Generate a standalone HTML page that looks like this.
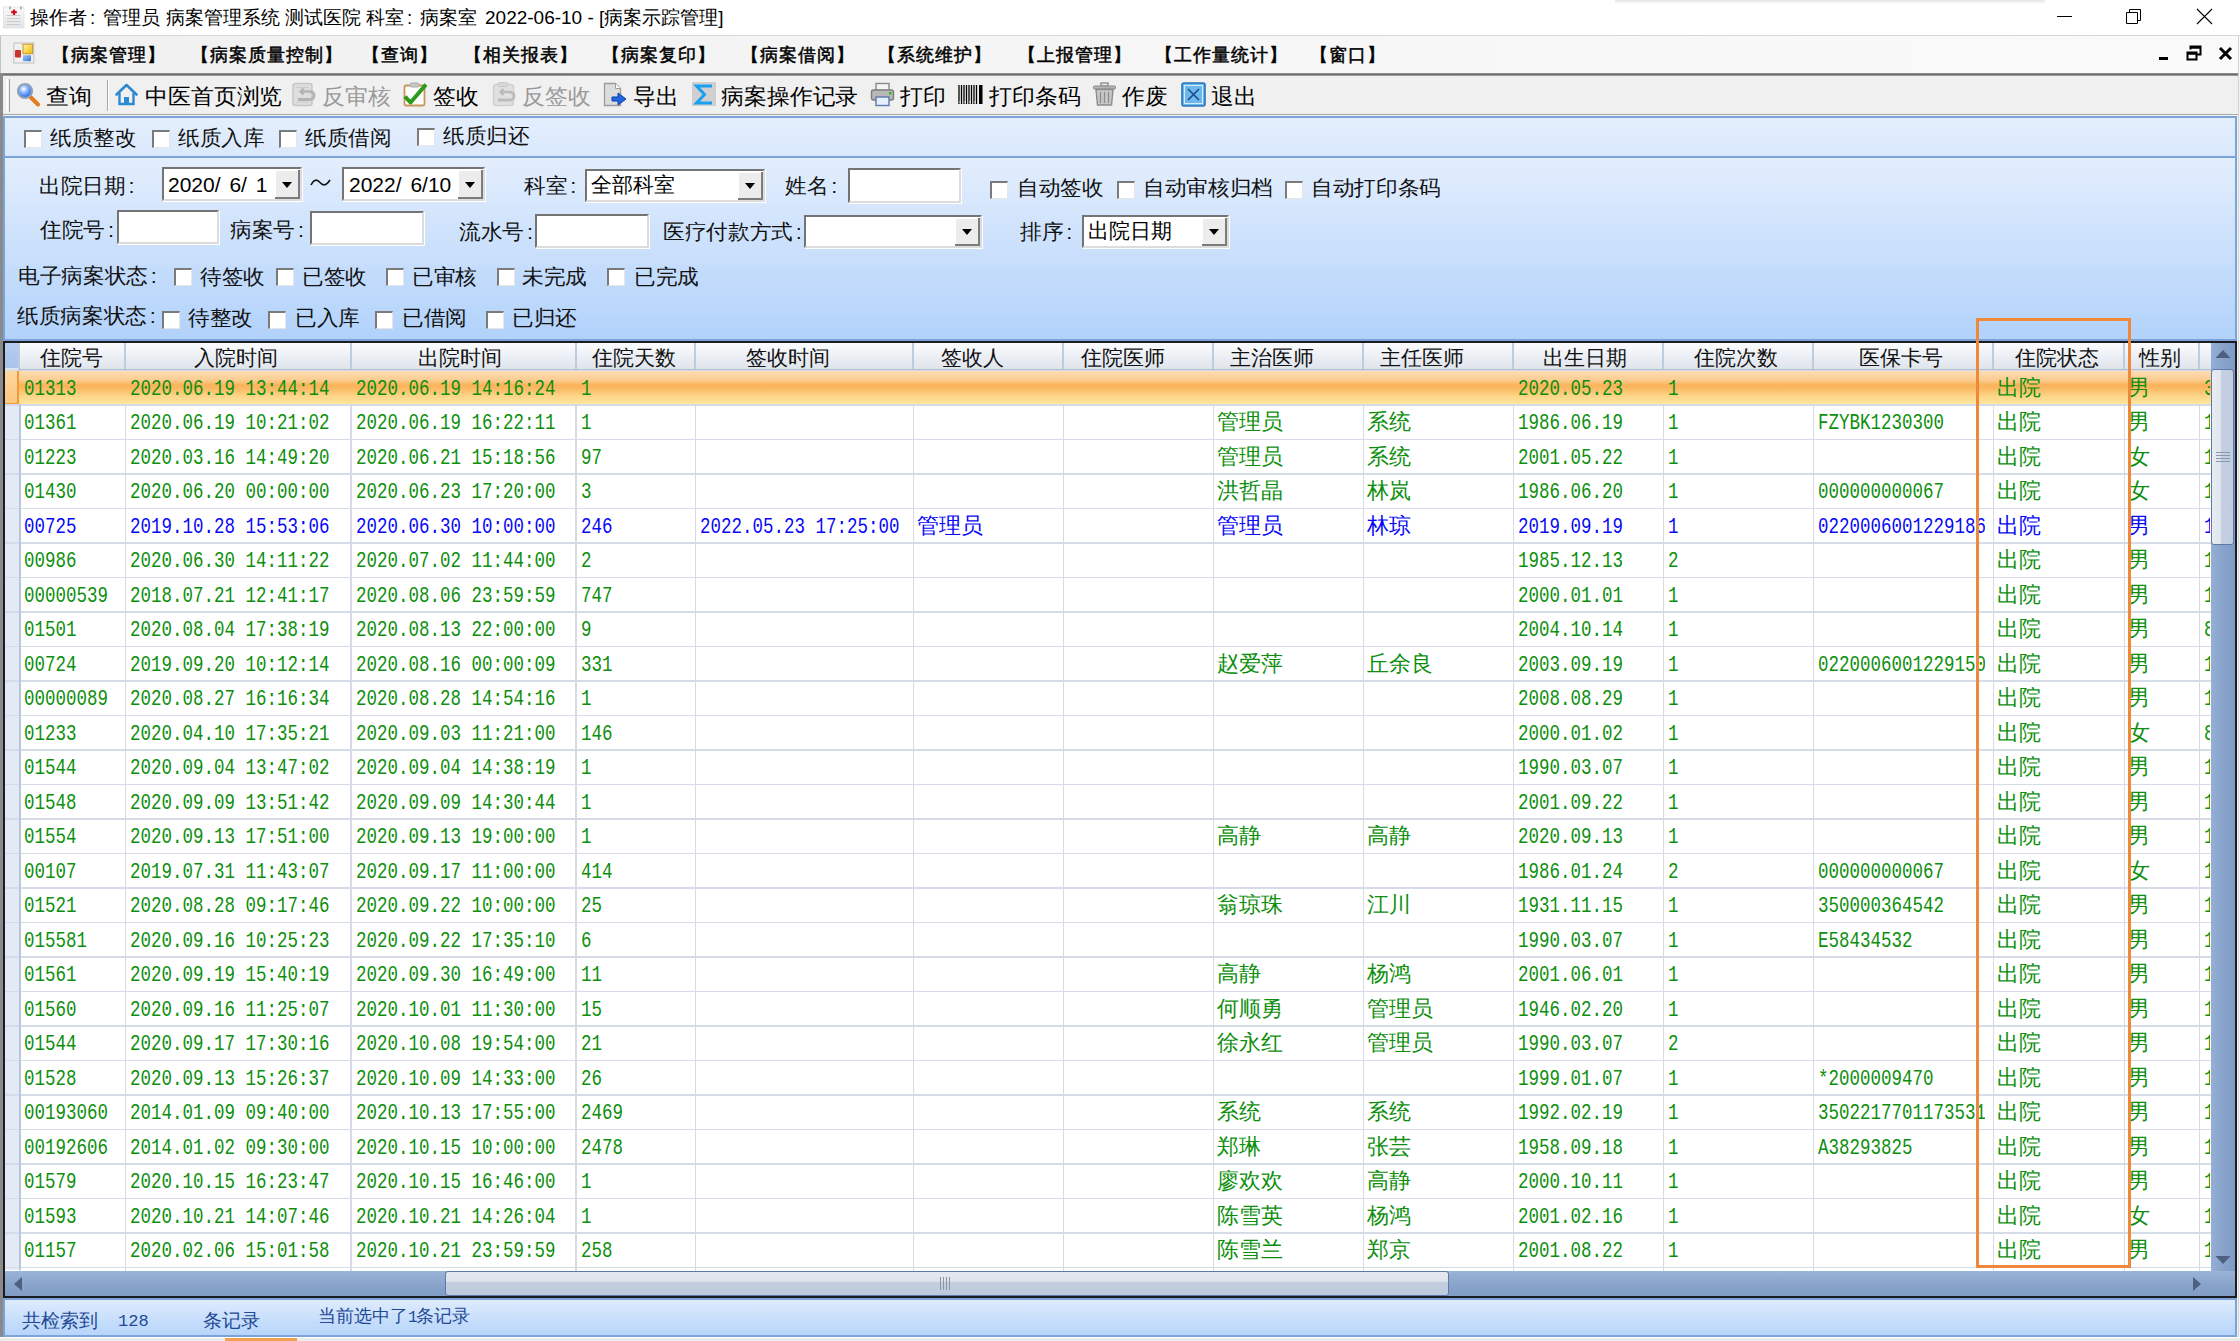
<!DOCTYPE html>
<html><head><meta charset="utf-8">
<style>
*{margin:0;padding:0;box-sizing:border-box}
html,body{width:2240px;height:1341px;overflow:hidden;background:#f2f2f2;font-family:"Liberation Sans",sans-serif;color:#000}
.a{position:absolute}
.t{position:absolute;white-space:nowrap;line-height:1}
#title{left:0;top:0;width:2240px;height:36px;background:#fff;border-bottom:1px solid #d6d6d6}
#menu{left:0;top:36px;width:2240px;height:37px;background:linear-gradient(90deg,#f0f0f0,#f6f6f6 50%,#fafafa)}
#menusep{left:0;top:72.5px;width:2238px;height:3px;background:linear-gradient(#9a9a9a,#6e6e6e,#b0b0b0)}
#tool{left:3px;top:75.5px;width:2235px;height:39px;background:#f0f0f0;border-bottom:1.5px solid #a8a8a8}
.leftbar{left:0;top:73px;width:3px;height:1268px;background:#8a8a8a}
#cbp{left:3px;top:116px;width:2234px;height:42px;background:linear-gradient(#e4effd,#dae8fc);border:2px solid #7ba3d9}
#flt{left:3px;top:158px;width:2234px;height:183px;background:linear-gradient(#e3eefd,#b2d2fb);border:2px solid #7ba3d9;border-top:none}
.menu-i{font-size:18px;font-weight:normal;top:46px;color:#000;letter-spacing:1px;-webkit-text-stroke:0.5px #000}
.co{display:inline-block;width:12px;padding-left:3px}
.ttl{top:8px;font-size:19px;color:#000}
.tb{font-size:22px;top:85.5px;color:#000;transform:scaleX(1.04);transform-origin:0 0}
.tb.dis{color:#9a9a9a}
.lbl{font-size:21px;color:#111;transform:scaleX(1.03);transform-origin:0 0}
.cb{position:absolute;width:18px;height:18px;background:#fff;border-top:2px solid #7a7a7a;border-left:2px solid #7a7a7a;border-right:1px solid #e6e6e6;border-bottom:1px solid #e6e6e6}
.inp{position:absolute;background:#fff;border-top:2px solid #747474;border-left:2px solid #747474;border-right:2px solid #dcdcdc;border-bottom:2px solid #dcdcdc;box-shadow:1px 1px 0 #fff}
.dd{position:absolute;right:0;top:1px;width:25px;bottom:0;background:#ececec;border-right:2px solid #7c7c7c;border-bottom:2px solid #7c7c7c;box-shadow:inset 1px 1px 0 #fff}
.dd:after{content:"";position:absolute;left:7px;top:50%;margin-top:-2px;border-left:5px solid transparent;border-right:5px solid transparent;border-top:6px solid #000}
.inptxt.dt{font-size:21px;top:5px;word-spacing:3px;white-space:pre}
.inptxt{position:absolute;left:4px;top:3px;font-size:21px;white-space:nowrap;line-height:1}
.hdr{background:linear-gradient(#fbfcfd 0%,#eef1f6 45%,#dfe4ec 100%);border-bottom:1px solid #b0c0d4}
.rl{height:1.5px;background:#d5dce8}
.sel{background:linear-gradient(#fcdcb4 0%,#fbcc90 28%,#fab45a 42%,#fbb862 52%,#fcd488 75%,#fde69c 100%)}
.cl{width:1.5px;background:#d5dce8}
.hl{width:2px;background:#bccde0}
.ht{font-size:21px;text-align:center;color:#111;line-height:1}
.cellc{font-size:22px;line-height:1;white-space:nowrap;overflow:hidden}
.celld{font-family:"Liberation Mono",monospace;font-size:22px;line-height:1;white-space:nowrap;overflow:hidden}
.celld span{display:inline-block;transform:scaleX(0.795);transform-origin:0 0}
</style></head><body>
<!-- title bar -->
<div id="title" class="a"></div>
<div class="a" style="left:1615px;top:0;width:430px;height:4px;background:linear-gradient(#d8d8d8,#fff);opacity:.7"></div>
<svg class="a" style="left:3px;top:5px" width="22" height="24" viewBox="0 0 22 24">
<defs><linearGradient id="pad" x1="0" y1="0" x2="0" y2="1"><stop offset="0" stop-color="#fafafa"/><stop offset="1" stop-color="#e4e4e4"/></linearGradient></defs>
<rect x="0.5" y="2" width="20.5" height="21" fill="url(#pad)" stroke="#e0e0e0" stroke-width="0.8"/>
<path d="M7 1.5v3M18 1.5v3" stroke="#8a8a8a" stroke-width="1.2"/>
<path d="M3.5 10.5h14M3.5 13.5h14M3.5 16.5h14M3.5 19.5h14" stroke="#c4c8cc" stroke-width="0.9"/>
<path d="M11 4.5v5.5M8.2 7.2h5.6" stroke="#d81020" stroke-width="2.2"/>
</svg>
<div class="t ttl" style="left:30px">操作者<span class="co">:</span></div>
<div class="t ttl" style="left:103px">管理员</div>
<div class="t ttl" style="left:166px">病案管理系统</div>
<div class="t ttl" style="left:285px">测试医院</div>
<div class="t ttl" style="left:366px">科室<span class="co">:</span></div>
<div class="t ttl" style="left:420px">病案室</div>
<div class="t ttl" style="left:485px">2022-06-10 - [病案示踪管理]</div>
<div class="a" style="left:2057px;top:16px;width:15px;height:1px;background:#000"></div>
<svg class="a" style="left:2125px;top:8px" width="18" height="18" viewBox="0 0 18 18"><path d="M1.5 4.5h11v11h-11z M4.5 4.5v-3h11v11h-3" fill="none" stroke="#000" stroke-width="1"/></svg>
<svg class="a" style="left:2196px;top:8px" width="18" height="18" viewBox="0 0 18 18"><path d="M1 1L16 16M16 1L1 16" stroke="#000" stroke-width="1.1"/></svg>

<!-- menu bar -->
<div id="menu" class="a"></div>
<div id="menusep" class="a"></div>
<div class="leftbar a"></div>
<div class="a" style="left:0;top:36px;width:1px;height:37px;background:#c4c4c4"></div>
<svg class="a" style="left:13px;top:42px" width="22" height="22" viewBox="0 0 22 22">
<defs><linearGradient id="yel" x1="0" y1="0" x2="1" y2="1"><stop offset="0" stop-color="#fff4b0"/><stop offset="1" stop-color="#f0b800"/></linearGradient>
<linearGradient id="blu" x1="0" y1="0" x2="1" y2="1"><stop offset="0" stop-color="#9cc4ff"/><stop offset="1" stop-color="#3f76d8"/></linearGradient></defs>
<rect x="0.8" y="1" width="20" height="20" fill="#f0f0f0" stroke="#c8c8c8" stroke-width="1.2"/>
<rect x="10" y="2.2" width="9.5" height="9.5" fill="url(#yel)" stroke="#c8981a" stroke-width="1"/>
<rect x="2" y="8" width="6" height="7.5" rx="1" fill="#c8342a"/>
<rect x="10" y="13.2" width="8" height="6" fill="url(#blu)"/>
</svg>
<div class="t menu-i" style="left:52.0px">【病案管理】</div>
<div class="t menu-i" style="left:190.5px">【病案质量控制】</div>
<div class="t menu-i" style="left:362.0px">【查询】</div>
<div class="t menu-i" style="left:464.0px">【相关报表】</div>
<div class="t menu-i" style="left:601.5px">【病案复印】</div>
<div class="t menu-i" style="left:740.8px">【病案借阅】</div>
<div class="t menu-i" style="left:878.0px">【系统维护】</div>
<div class="t menu-i" style="left:1017.6px">【上报管理】</div>
<div class="t menu-i" style="left:1155.0px">【工作量统计】</div>
<div class="t menu-i" style="left:1310.0px">【窗口】</div>
<div class="a" style="left:2159px;top:57px;width:9px;height:3px;background:#000"></div>
<svg class="a" style="left:2186px;top:45px" width="16" height="16" viewBox="0 0 16 16"><path d="M1.5 7.5h9v7h-9z" fill="none" stroke="#000" stroke-width="2"/><path d="M4.5 4.5v-3h10v8h-4" fill="none" stroke="#000" stroke-width="2"/><path d="M4 2.5h10.5" stroke="#000" stroke-width="2.5"/><path d="M1 8.5h10" stroke="#000" stroke-width="2.5"/></svg>
<svg class="a" style="left:2218px;top:46px" width="15" height="15" viewBox="0 0 15 15"><path d="M2 2L13 13M13 2L2 13" stroke="#000" stroke-width="3"/></svg>

<!-- toolbar -->
<div id="tool" class="a"></div>
<!-- gripper -->
<div class="a" style="left:6px;top:79px;width:2px;height:32px;background:#fcfcfc"></div>
<div class="a" style="left:8.5px;top:79px;width:1.5px;height:33px;background:#a0a0a0"></div>
<!-- search icon -->
<svg class="a" style="left:16px;top:82px" width="25" height="25" viewBox="0 0 25 25">
<defs><radialGradient id="lens" cx="0.4" cy="0.35" r="0.6"><stop offset="0" stop-color="#ffffff"/><stop offset="0.45" stop-color="#8fb8ff"/><stop offset="1" stop-color="#2f6fe8"/></radialGradient></defs>
<line x1="14.5" y1="15" x2="22" y2="22.5" stroke="#e67a1e" stroke-width="4" stroke-linecap="round"/>
<circle cx="9" cy="9" r="7" fill="url(#lens)" stroke="#8fa3b8" stroke-width="2.2"/>
</svg>
<div class="t tb" style="left:46px">查询</div>
<div class="a" style="left:107px;top:80px;width:1px;height:31px;background:#a8a8a8"></div>
<div class="a" style="left:108px;top:80px;width:1px;height:31px;background:#fff"></div>
<!-- home -->
<svg class="a" style="left:114px;top:82px" width="25" height="25" viewBox="0 0 25 25">
<path d="M2.5 12.5L12.5 3L22.5 12.5" fill="none" stroke="#2b8ad0" stroke-width="2.6" stroke-linejoin="round" stroke-linecap="round"/>
<path d="M5.5 11v11h14V11" fill="none" stroke="#2b8ad0" stroke-width="2.4"/>
<rect x="10" y="15" width="5" height="7" fill="#2b8ad0"/>
</svg>
<div class="t tb" style="left:145px">中医首页浏览</div>
<!-- 反审核 disabled -->
<svg class="a" style="left:292px;top:82px" width="25" height="25" viewBox="0 0 25 25">
<rect x="1" y="1.5" width="19" height="22" rx="2.5" fill="#dedede" stroke="#c6c6c6" stroke-width="1.5"/>
<path d="M5 5.5h11M5 20h11" stroke="#c0c0c0" stroke-width="1.2" stroke-dasharray="2 1"/>
<path d="M18 9.5H8.5M11.5 6.5l-3 3 3 3" fill="none" stroke="#b4b4b4" stroke-width="2.4"/>
<path d="M6 17.5h12a4 4 0 0 0 0-8" fill="none" stroke="#b4b4b4" stroke-width="3"/>
</svg>
<div class="t tb dis" style="left:322px">反审核</div>
<!-- 签收 -->
<svg class="a" style="left:403px;top:82px" width="26" height="25" viewBox="0 0 26 25">
<rect x="1.5" y="3.5" width="20" height="20" rx="1.5" fill="#fff" stroke="#c8965a" stroke-width="1.8"/>
<rect x="7" y="1" width="9" height="4" rx="1.5" fill="#c8c8c8" stroke="#a8a8a8" stroke-width="1"/>
<path d="M2 14.5l5.5 6l15.5-18" fill="none" stroke="#2c9a1a" stroke-width="4" stroke-linejoin="round"/>
</svg>
<div class="t tb" style="left:433px">签收</div>
<!-- 反签收 disabled -->
<svg class="a" style="left:492px;top:82px" width="25" height="25" viewBox="0 0 25 25">
<rect x="1.5" y="2.5" width="20" height="21" rx="3" fill="#e0e0e0" stroke="#d0d0d0" stroke-width="1.5"/>
<rect x="6" y="0.5" width="10" height="4" rx="1.5" fill="#d8d8d8" stroke="#c8c8c8" stroke-width="1"/>
<path d="M18 10H8.5M11.5 7l-3 3 3 3" fill="none" stroke="#bcbcbc" stroke-width="2.4"/>
<path d="M6 18h12a4 4 0 0 0 0-8" fill="none" stroke="#bcbcbc" stroke-width="3"/>
</svg>
<div class="t tb dis" style="left:522px">反签收</div>
<!-- 导出 -->
<svg class="a" style="left:603px;top:82px" width="25" height="25" viewBox="0 0 25 25">
<path d="M1.5 1.5h11l5 5v17h-16z" fill="#dcdcdc" stroke="#9c9c9c" stroke-width="1.3"/>
<path d="M12.5 1.5v5h5" fill="#fff" stroke="#9c9c9c" stroke-width="1"/>
<path d="M9 15h6v-4l8 6-8 6v-4H9z" fill="#1f66e0" stroke="#0d3ea8" stroke-width="1"/>
</svg>
<div class="t tb" style="left:633px">导出</div>
<!-- sigma -->
<svg class="a" style="left:692px;top:82px" width="24" height="25" viewBox="0 0 24 25">
<rect x="0" y="0" width="24" height="24" fill="#cfcfcf"/>
<path d="M20 4H4.5l8 8.5-8 8.5H20" fill="none" stroke="#1aa0f0" stroke-width="3" stroke-linejoin="miter"/>
</svg>
<div class="t tb" style="left:721px">病案操作记录</div>
<!-- printer -->
<svg class="a" style="left:870px;top:82px" width="25" height="25" viewBox="0 0 25 25">
<rect x="6" y="1.5" width="13" height="7" fill="#f4f4f4" stroke="#8a8a8a" stroke-width="1.4"/>
<rect x="1.5" y="8" width="22" height="10" rx="2" fill="#b8b8b8" stroke="#7c7c7c" stroke-width="1.4"/>
<rect x="6" y="15" width="13" height="8.5" fill="#e6f0ff" stroke="#5a78a8" stroke-width="1.4"/>
<rect x="19" y="10" width="2.5" height="2.5" fill="#22c022"/>
</svg>
<div class="t tb" style="left:900px">打印</div>
<!-- barcode -->
<svg class="a" style="left:958px;top:85px" width="25" height="19" viewBox="0 0 25 19">
<path d="M1 0v19M3.5 0v19M6 0v19M8.5 0v19M11 0v19M13.5 0v19M16 0v19M18.5 0v19" stroke="#000" stroke-width="1.3"/>
<rect x="21" y="0" width="3.5" height="19" fill="#000"/>
<path d="M2 16v2M7 16v2M12 16v2M17 16v2" stroke="#fff" stroke-width="0.8"/>
</svg>
<div class="t tb" style="left:989px">打印条码</div>
<!-- trash -->
<svg class="a" style="left:1092px;top:82px" width="25" height="25" viewBox="0 0 25 25">
<rect x="9" y="1" width="7" height="3" fill="none" stroke="#8c8c8c" stroke-width="1.4"/>
<rect x="1.5" y="4" width="22" height="3" rx="1" fill="#b4b4b4" stroke="#8c8c8c" stroke-width="1"/>
<path d="M4 7.5l1.5 15.5h14L21 7.5z" fill="#c8c8c8" stroke="#8c8c8c" stroke-width="1.4"/>
<path d="M8.5 10v11M12.5 10v11M16.5 10v11" stroke="#8c8c8c" stroke-width="1.3"/>
</svg>
<div class="t tb" style="left:1122px">作废</div>
<!-- exit -->
<svg class="a" style="left:1181px;top:82px" width="25" height="25" viewBox="0 0 25 25">
<rect x="1" y="1" width="23" height="23" rx="2" fill="#6cb8ee" stroke="#2a74b8" stroke-width="1.6"/>
<rect x="3.5" y="3.5" width="18" height="18" fill="none" stroke="#d4ecfc" stroke-width="1"/>
<path d="M7 7l11 11M18 7L7 18" stroke="#1a4a8a" stroke-width="1.6"/>
</svg>
<div class="t tb" style="left:1211px">退出</div>


<!-- checkbox panel -->
<div id="cbp" class="a"></div>
<div id="flt" class="a"></div>
<!-- checkbox panel row -->
<div class="cb" style="left:24px;top:130px"></div><div class="t lbl" style="left:50px;top:127px">纸质整改</div>
<div class="cb" style="left:152px;top:130px"></div><div class="t lbl" style="left:178px;top:127px">纸质入库</div>
<div class="cb" style="left:279px;top:130px"></div><div class="t lbl" style="left:305px;top:127px">纸质借阅</div>
<div class="cb" style="left:417px;top:128px"></div><div class="t lbl" style="left:443px;top:125px">纸质归还</div>
<!-- filter row 1 -->
<div class="t lbl" style="left:39px;top:175px">出院日期<span class="co">:</span></div>
<div class="inp" style="left:162px;top:167px;width:140px;height:34px"><div class="inptxt dt" style="left:4px">2020/ 6/ 1</div><div class="dd"></div></div>
<svg class="a" style="left:310px;top:177px" width="21" height="11" viewBox="0 0 21 11"><path d="M1 8C4 2 7 2 10 5.5S16 9 20 3" fill="none" stroke="#111" stroke-width="1.6"/></svg>
<div class="inp" style="left:342px;top:167px;width:143px;height:34px"><div class="inptxt dt" style="left:5px">2022/ 6/10</div><div class="dd"></div></div>
<div class="t lbl" style="left:524px;top:175px">科室<span class="co">:</span></div>
<div class="inp" style="left:585px;top:169px;width:180px;height:33px"><div class="inptxt">全部科室</div><div class="dd"></div></div>
<div class="t lbl" style="left:785px;top:175px">姓名<span class="co">:</span></div>
<div class="inp" style="left:848px;top:168px;width:113px;height:35px"></div>
<div class="cb" style="left:990px;top:181px"></div><div class="t lbl" style="left:1017px;top:177px">自动签收</div>
<div class="cb" style="left:1117px;top:181px"></div><div class="t lbl" style="left:1143px;top:177px">自动审核归档</div>
<div class="cb" style="left:1285px;top:181px"></div><div class="t lbl" style="left:1311px;top:177px">自动打印条码</div>
<!-- filter row 2 -->
<div class="t lbl" style="left:40px;top:219px">住院号<span class="co">:</span></div>
<div class="inp" style="left:117px;top:210px;width:102px;height:34px"></div>
<div class="t lbl" style="left:230px;top:219px">病案号<span class="co">:</span></div>
<div class="inp" style="left:310px;top:211px;width:114px;height:34px"></div>
<div class="t lbl" style="left:459px;top:221px">流水号<span class="co">:</span></div>
<div class="inp" style="left:535px;top:214px;width:114px;height:34px"></div>
<div class="t lbl" style="left:663px;top:221px">医疗付款方式<span class="co">:</span></div>
<div class="inp" style="left:804px;top:215px;width:178px;height:33px"><div class="dd"></div></div>
<div class="t lbl" style="left:1020px;top:221px">排序<span class="co">:</span></div>
<div class="inp" style="left:1082px;top:215px;width:147px;height:33px"><div class="inptxt">出院日期</div><div class="dd"></div></div>
<!-- filter row 3 -->
<div class="t lbl" style="left:18px;top:265px">电子病案状态<span class="co">:</span></div>
<div class="cb" style="left:174px;top:268px"></div><div class="t lbl" style="left:200px;top:266px">待签收</div>
<div class="cb" style="left:276px;top:268px"></div><div class="t lbl" style="left:302px;top:266px">已签收</div>
<div class="cb" style="left:386px;top:268px"></div><div class="t lbl" style="left:412px;top:266px">已审核</div>
<div class="cb" style="left:497px;top:268px"></div><div class="t lbl" style="left:522px;top:266px">未完成</div>
<div class="cb" style="left:607px;top:268px"></div><div class="t lbl" style="left:634px;top:266px">已完成</div>
<!-- filter row 4 -->
<div class="t lbl" style="left:17px;top:305px">纸质病案状态<span class="co">:</span></div>
<div class="cb" style="left:162px;top:311px"></div><div class="t lbl" style="left:188px;top:307px">待整改</div>
<div class="cb" style="left:268px;top:311px"></div><div class="t lbl" style="left:295px;top:307px">已入库</div>
<div class="cb" style="left:375px;top:311px"></div><div class="t lbl" style="left:402px;top:307px">已借阅</div>
<div class="cb" style="left:486px;top:311px"></div><div class="t lbl" style="left:512px;top:307px">已归还</div>


<!--GRID-->
<div class="a" style="left:3px;top:341px;width:2234px;height:957px;background:#1b1b22"></div>
<div class="a" style="left:5px;top:343px;width:2230px;height:953px;background:#fff;overflow:hidden">
<div class="a hdr" style="left:0;top:0;width:2206px;height:27.19999999999999px"></div>
<div class="a" style="left:0;top:0;width:14px;height:27.19999999999999px;background:linear-gradient(#f3f5f9,#dfe4ec)"></div>
<div class="a" style="left:0px;top:0px;width:13px;height:25.19999999999999px;background:linear-gradient(#b4cdf0,#a9c3ea)"></div>
<div class="a" style="left:0;top:27.19999999999999px;width:14px;height:900px;background:#e3eaf5"></div>
<div class="a rl" style="left:0;top:26.7px;width:2206px"></div>
<div class="a rl" style="left:0;top:61.2px;width:2206px"></div>
<div class="a rl" style="left:0;top:95.7px;width:2206px"></div>
<div class="a rl" style="left:0;top:130.2px;width:2206px"></div>
<div class="a rl" style="left:0;top:164.7px;width:2206px"></div>
<div class="a rl" style="left:0;top:199.2px;width:2206px"></div>
<div class="a rl" style="left:0;top:233.7px;width:2206px"></div>
<div class="a rl" style="left:0;top:268.2px;width:2206px"></div>
<div class="a rl" style="left:0;top:302.7px;width:2206px"></div>
<div class="a rl" style="left:0;top:337.2px;width:2206px"></div>
<div class="a rl" style="left:0;top:371.7px;width:2206px"></div>
<div class="a rl" style="left:0;top:406.2px;width:2206px"></div>
<div class="a rl" style="left:0;top:440.7px;width:2206px"></div>
<div class="a rl" style="left:0;top:475.2px;width:2206px"></div>
<div class="a rl" style="left:0;top:509.7px;width:2206px"></div>
<div class="a rl" style="left:0;top:544.2px;width:2206px"></div>
<div class="a rl" style="left:0;top:578.7px;width:2206px"></div>
<div class="a rl" style="left:0;top:613.2px;width:2206px"></div>
<div class="a rl" style="left:0;top:647.7px;width:2206px"></div>
<div class="a rl" style="left:0;top:682.2px;width:2206px"></div>
<div class="a rl" style="left:0;top:716.7px;width:2206px"></div>
<div class="a rl" style="left:0;top:751.2px;width:2206px"></div>
<div class="a rl" style="left:0;top:785.7px;width:2206px"></div>
<div class="a rl" style="left:0;top:820.2px;width:2206px"></div>
<div class="a rl" style="left:0;top:854.7px;width:2206px"></div>
<div class="a rl" style="left:0;top:889.2px;width:2206px"></div>
<div class="a rl" style="left:0;top:923.7px;width:2206px"></div>
<div class="a cl" style="left:13.5px;top:27.7px;height:900px"></div>
<div class="a hl" style="left:13.0px;top:0px;height:26.19999999999999px"></div>
<div class="a cl" style="left:119.5px;top:27.7px;height:900px"></div>
<div class="a hl" style="left:119.0px;top:0px;height:26.19999999999999px"></div>
<div class="a cl" style="left:345.0px;top:27.7px;height:900px"></div>
<div class="a hl" style="left:344.5px;top:0px;height:26.19999999999999px"></div>
<div class="a cl" style="left:570.0px;top:27.7px;height:900px"></div>
<div class="a hl" style="left:569.5px;top:0px;height:26.19999999999999px"></div>
<div class="a cl" style="left:689.5px;top:27.7px;height:900px"></div>
<div class="a hl" style="left:689.0px;top:0px;height:26.19999999999999px"></div>
<div class="a cl" style="left:907.5px;top:27.7px;height:900px"></div>
<div class="a hl" style="left:907.0px;top:0px;height:26.19999999999999px"></div>
<div class="a cl" style="left:1057.5px;top:27.7px;height:900px"></div>
<div class="a hl" style="left:1057.0px;top:0px;height:26.19999999999999px"></div>
<div class="a cl" style="left:1207.5px;top:27.7px;height:900px"></div>
<div class="a hl" style="left:1207.0px;top:0px;height:26.19999999999999px"></div>
<div class="a cl" style="left:1357.5px;top:27.7px;height:900px"></div>
<div class="a hl" style="left:1357.0px;top:0px;height:26.19999999999999px"></div>
<div class="a cl" style="left:1507.5px;top:27.7px;height:900px"></div>
<div class="a hl" style="left:1507.0px;top:0px;height:26.19999999999999px"></div>
<div class="a cl" style="left:1657.5px;top:27.7px;height:900px"></div>
<div class="a hl" style="left:1657.0px;top:0px;height:26.19999999999999px"></div>
<div class="a cl" style="left:1807.5px;top:27.7px;height:900px"></div>
<div class="a hl" style="left:1807.0px;top:0px;height:26.19999999999999px"></div>
<div class="a cl" style="left:1987.5px;top:27.7px;height:900px"></div>
<div class="a hl" style="left:1987.0px;top:0px;height:26.19999999999999px"></div>
<div class="a cl" style="left:2118.5px;top:27.7px;height:900px"></div>
<div class="a hl" style="left:2118.0px;top:0px;height:26.19999999999999px"></div>
<div class="a cl" style="left:2193.5px;top:27.7px;height:900px"></div>
<div class="a hl" style="left:2193.0px;top:0px;height:26.19999999999999px"></div>
<div class="a" style="left:13.5px;top:27.19999999999999px;width:2px;height:900px;background:#b7c7dc"></div>
<div class="a sel" style="left:14px;top:27.7px;width:2192px;height:33.5px"></div>
<div class="a" style="left:0;top:27.7px;width:14px;height:33.5px;background:linear-gradient(#fcd7a0,#fbc77e);border-right:2px solid #f19a3a;border-bottom:1px solid #f19a3a"></div>
<div class="t ht" style="left:35px;top:3.5px">住院号</div>
<div class="t ht" style="left:189px;top:3.5px">入院时间</div>
<div class="t ht" style="left:413px;top:3.5px">出院时间</div>
<div class="t ht" style="left:586.5px;top:3.5px">住院天数</div>
<div class="t ht" style="left:740.5px;top:3.5px">签收时间</div>
<div class="t ht" style="left:935.5px;top:3.5px">签收人</div>
<div class="t ht" style="left:1076px;top:3.5px">住院医师</div>
<div class="t ht" style="left:1225px;top:3.5px">主治医师</div>
<div class="t ht" style="left:1375px;top:3.5px">主任医师</div>
<div class="t ht" style="left:1538px;top:3.5px">出生日期</div>
<div class="t ht" style="left:1689px;top:3.5px">住院次数</div>
<div class="t ht" style="left:1854px;top:3.5px">医保卡号</div>
<div class="t ht" style="left:2010px;top:3.5px">住院状态</div>
<div class="t ht" style="left:2134px;top:3.5px">性别</div>
<div class="a celld" style="left:19px;top:35.7px;width:100px;color:#0d8f0d"><span>01313</span></div>
<div class="a celld" style="left:125px;top:35.7px;width:219.5px;color:#0d8f0d"><span>2020.06.19 13:44:14</span></div>
<div class="a celld" style="left:350.5px;top:35.7px;width:219.0px;color:#0d8f0d"><span>2020.06.19 14:16:24</span></div>
<div class="a celld" style="left:575.5px;top:35.7px;width:113.5px;color:#0d8f0d"><span>1</span></div>
<div class="a celld" style="left:1513px;top:35.7px;width:144px;color:#0d8f0d"><span>2020.05.23</span></div>
<div class="a celld" style="left:1663px;top:35.7px;width:144px;color:#0d8f0d"><span>1</span></div>
<div class="a cellc" style="left:1992px;top:33.7px;width:125px;color:#0d8f0d">出院</div>
<div class="a cellc" style="left:2123px;top:33.7px;width:69px;color:#0d8f0d">男</div>
<div class="a celld" style="left:2199px;top:35.7px;width:6px;color:#0d8f0d"><span>3</span></div>
<div class="a celld" style="left:19px;top:70.2px;width:100px;color:#0d8f0d"><span>01361</span></div>
<div class="a celld" style="left:125px;top:70.2px;width:219.5px;color:#0d8f0d"><span>2020.06.19 10:21:02</span></div>
<div class="a celld" style="left:350.5px;top:70.2px;width:219.0px;color:#0d8f0d"><span>2020.06.19 16:22:11</span></div>
<div class="a celld" style="left:575.5px;top:70.2px;width:113.5px;color:#0d8f0d"><span>1</span></div>
<div class="a cellc" style="left:1212px;top:68.2px;width:144px;color:#0d8f0d">管理员</div>
<div class="a cellc" style="left:1362px;top:68.2px;width:144px;color:#0d8f0d">系统</div>
<div class="a celld" style="left:1513px;top:70.2px;width:144px;color:#0d8f0d"><span>1986.06.19</span></div>
<div class="a celld" style="left:1663px;top:70.2px;width:144px;color:#0d8f0d"><span>1</span></div>
<div class="a celld" style="left:1813px;top:70.2px;width:167px;color:#0d8f0d"><span>FZYBK1230300</span></div>
<div class="a cellc" style="left:1992px;top:68.2px;width:125px;color:#0d8f0d">出院</div>
<div class="a cellc" style="left:2123px;top:68.2px;width:69px;color:#0d8f0d">男</div>
<div class="a celld" style="left:2199px;top:70.2px;width:6px;color:#0d8f0d"><span>1</span></div>
<div class="a celld" style="left:19px;top:104.7px;width:100px;color:#0d8f0d"><span>01223</span></div>
<div class="a celld" style="left:125px;top:104.7px;width:219.5px;color:#0d8f0d"><span>2020.03.16 14:49:20</span></div>
<div class="a celld" style="left:350.5px;top:104.7px;width:219.0px;color:#0d8f0d"><span>2020.06.21 15:18:56</span></div>
<div class="a celld" style="left:575.5px;top:104.7px;width:113.5px;color:#0d8f0d"><span>97</span></div>
<div class="a cellc" style="left:1212px;top:102.7px;width:144px;color:#0d8f0d">管理员</div>
<div class="a cellc" style="left:1362px;top:102.7px;width:144px;color:#0d8f0d">系统</div>
<div class="a celld" style="left:1513px;top:104.7px;width:144px;color:#0d8f0d"><span>2001.05.22</span></div>
<div class="a celld" style="left:1663px;top:104.7px;width:144px;color:#0d8f0d"><span>1</span></div>
<div class="a cellc" style="left:1992px;top:102.7px;width:125px;color:#0d8f0d">出院</div>
<div class="a cellc" style="left:2123px;top:102.7px;width:69px;color:#0d8f0d">女</div>
<div class="a celld" style="left:2199px;top:104.7px;width:6px;color:#0d8f0d"><span>1</span></div>
<div class="a celld" style="left:19px;top:139.2px;width:100px;color:#0d8f0d"><span>01430</span></div>
<div class="a celld" style="left:125px;top:139.2px;width:219.5px;color:#0d8f0d"><span>2020.06.20 00:00:00</span></div>
<div class="a celld" style="left:350.5px;top:139.2px;width:219.0px;color:#0d8f0d"><span>2020.06.23 17:20:00</span></div>
<div class="a celld" style="left:575.5px;top:139.2px;width:113.5px;color:#0d8f0d"><span>3</span></div>
<div class="a cellc" style="left:1212px;top:137.2px;width:144px;color:#0d8f0d">洪哲晶</div>
<div class="a cellc" style="left:1362px;top:137.2px;width:144px;color:#0d8f0d">林岚</div>
<div class="a celld" style="left:1513px;top:139.2px;width:144px;color:#0d8f0d"><span>1986.06.20</span></div>
<div class="a celld" style="left:1663px;top:139.2px;width:144px;color:#0d8f0d"><span>1</span></div>
<div class="a celld" style="left:1813px;top:139.2px;width:167px;color:#0d8f0d"><span>000000000067</span></div>
<div class="a cellc" style="left:1992px;top:137.2px;width:125px;color:#0d8f0d">出院</div>
<div class="a cellc" style="left:2123px;top:137.2px;width:69px;color:#0d8f0d">女</div>
<div class="a celld" style="left:2199px;top:139.2px;width:6px;color:#0d8f0d"><span>1</span></div>
<div class="a celld" style="left:19px;top:173.7px;width:100px;color:#0808f8"><span>00725</span></div>
<div class="a celld" style="left:125px;top:173.7px;width:219.5px;color:#0808f8"><span>2019.10.28 15:53:06</span></div>
<div class="a celld" style="left:350.5px;top:173.7px;width:219.0px;color:#0808f8"><span>2020.06.30 10:00:00</span></div>
<div class="a celld" style="left:575.5px;top:173.7px;width:113.5px;color:#0808f8"><span>246</span></div>
<div class="a celld" style="left:695px;top:173.7px;width:212px;color:#0808f8"><span>2022.05.23 17:25:00</span></div>
<div class="a cellc" style="left:912px;top:171.7px;width:144px;color:#0808f8">管理员</div>
<div class="a cellc" style="left:1212px;top:171.7px;width:144px;color:#0808f8">管理员</div>
<div class="a cellc" style="left:1362px;top:171.7px;width:144px;color:#0808f8">林琼</div>
<div class="a celld" style="left:1513px;top:173.7px;width:144px;color:#0808f8"><span>2019.09.19</span></div>
<div class="a celld" style="left:1663px;top:173.7px;width:144px;color:#0808f8"><span>1</span></div>
<div class="a celld" style="left:1813px;top:173.7px;width:167px;color:#0808f8"><span>02200060012291866</span></div>
<div class="a cellc" style="left:1992px;top:171.7px;width:125px;color:#0808f8">出院</div>
<div class="a cellc" style="left:2123px;top:171.7px;width:69px;color:#0808f8">男</div>
<div class="a celld" style="left:2199px;top:173.7px;width:6px;color:#0808f8"><span>1</span></div>
<div class="a celld" style="left:19px;top:208.2px;width:100px;color:#0d8f0d"><span>00986</span></div>
<div class="a celld" style="left:125px;top:208.2px;width:219.5px;color:#0d8f0d"><span>2020.06.30 14:11:22</span></div>
<div class="a celld" style="left:350.5px;top:208.2px;width:219.0px;color:#0d8f0d"><span>2020.07.02 11:44:00</span></div>
<div class="a celld" style="left:575.5px;top:208.2px;width:113.5px;color:#0d8f0d"><span>2</span></div>
<div class="a celld" style="left:1513px;top:208.2px;width:144px;color:#0d8f0d"><span>1985.12.13</span></div>
<div class="a celld" style="left:1663px;top:208.2px;width:144px;color:#0d8f0d"><span>2</span></div>
<div class="a cellc" style="left:1992px;top:206.2px;width:125px;color:#0d8f0d">出院</div>
<div class="a cellc" style="left:2123px;top:206.2px;width:69px;color:#0d8f0d">男</div>
<div class="a celld" style="left:2199px;top:208.2px;width:6px;color:#0d8f0d"><span>1</span></div>
<div class="a celld" style="left:19px;top:242.7px;width:100px;color:#0d8f0d"><span>00000539</span></div>
<div class="a celld" style="left:125px;top:242.7px;width:219.5px;color:#0d8f0d"><span>2018.07.21 12:41:17</span></div>
<div class="a celld" style="left:350.5px;top:242.7px;width:219.0px;color:#0d8f0d"><span>2020.08.06 23:59:59</span></div>
<div class="a celld" style="left:575.5px;top:242.7px;width:113.5px;color:#0d8f0d"><span>747</span></div>
<div class="a celld" style="left:1513px;top:242.7px;width:144px;color:#0d8f0d"><span>2000.01.01</span></div>
<div class="a celld" style="left:1663px;top:242.7px;width:144px;color:#0d8f0d"><span>1</span></div>
<div class="a cellc" style="left:1992px;top:240.7px;width:125px;color:#0d8f0d">出院</div>
<div class="a cellc" style="left:2123px;top:240.7px;width:69px;color:#0d8f0d">男</div>
<div class="a celld" style="left:2199px;top:242.7px;width:6px;color:#0d8f0d"><span>1</span></div>
<div class="a celld" style="left:19px;top:277.2px;width:100px;color:#0d8f0d"><span>01501</span></div>
<div class="a celld" style="left:125px;top:277.2px;width:219.5px;color:#0d8f0d"><span>2020.08.04 17:38:19</span></div>
<div class="a celld" style="left:350.5px;top:277.2px;width:219.0px;color:#0d8f0d"><span>2020.08.13 22:00:00</span></div>
<div class="a celld" style="left:575.5px;top:277.2px;width:113.5px;color:#0d8f0d"><span>9</span></div>
<div class="a celld" style="left:1513px;top:277.2px;width:144px;color:#0d8f0d"><span>2004.10.14</span></div>
<div class="a celld" style="left:1663px;top:277.2px;width:144px;color:#0d8f0d"><span>1</span></div>
<div class="a cellc" style="left:1992px;top:275.2px;width:125px;color:#0d8f0d">出院</div>
<div class="a cellc" style="left:2123px;top:275.2px;width:69px;color:#0d8f0d">男</div>
<div class="a celld" style="left:2199px;top:277.2px;width:6px;color:#0d8f0d"><span>8</span></div>
<div class="a celld" style="left:19px;top:311.7px;width:100px;color:#0d8f0d"><span>00724</span></div>
<div class="a celld" style="left:125px;top:311.7px;width:219.5px;color:#0d8f0d"><span>2019.09.20 10:12:14</span></div>
<div class="a celld" style="left:350.5px;top:311.7px;width:219.0px;color:#0d8f0d"><span>2020.08.16 00:00:09</span></div>
<div class="a celld" style="left:575.5px;top:311.7px;width:113.5px;color:#0d8f0d"><span>331</span></div>
<div class="a cellc" style="left:1212px;top:309.7px;width:144px;color:#0d8f0d">赵爱萍</div>
<div class="a cellc" style="left:1362px;top:309.7px;width:144px;color:#0d8f0d">丘余良</div>
<div class="a celld" style="left:1513px;top:311.7px;width:144px;color:#0d8f0d"><span>2003.09.19</span></div>
<div class="a celld" style="left:1663px;top:311.7px;width:144px;color:#0d8f0d"><span>1</span></div>
<div class="a celld" style="left:1813px;top:311.7px;width:167px;color:#0d8f0d"><span>02200060012291500</span></div>
<div class="a cellc" style="left:1992px;top:309.7px;width:125px;color:#0d8f0d">出院</div>
<div class="a cellc" style="left:2123px;top:309.7px;width:69px;color:#0d8f0d">男</div>
<div class="a celld" style="left:2199px;top:311.7px;width:6px;color:#0d8f0d"><span>1</span></div>
<div class="a celld" style="left:19px;top:346.2px;width:100px;color:#0d8f0d"><span>00000089</span></div>
<div class="a celld" style="left:125px;top:346.2px;width:219.5px;color:#0d8f0d"><span>2020.08.27 16:16:34</span></div>
<div class="a celld" style="left:350.5px;top:346.2px;width:219.0px;color:#0d8f0d"><span>2020.08.28 14:54:16</span></div>
<div class="a celld" style="left:575.5px;top:346.2px;width:113.5px;color:#0d8f0d"><span>1</span></div>
<div class="a celld" style="left:1513px;top:346.2px;width:144px;color:#0d8f0d"><span>2008.08.29</span></div>
<div class="a celld" style="left:1663px;top:346.2px;width:144px;color:#0d8f0d"><span>1</span></div>
<div class="a cellc" style="left:1992px;top:344.2px;width:125px;color:#0d8f0d">出院</div>
<div class="a cellc" style="left:2123px;top:344.2px;width:69px;color:#0d8f0d">男</div>
<div class="a celld" style="left:2199px;top:346.2px;width:6px;color:#0d8f0d"><span>1</span></div>
<div class="a celld" style="left:19px;top:380.7px;width:100px;color:#0d8f0d"><span>01233</span></div>
<div class="a celld" style="left:125px;top:380.7px;width:219.5px;color:#0d8f0d"><span>2020.04.10 17:35:21</span></div>
<div class="a celld" style="left:350.5px;top:380.7px;width:219.0px;color:#0d8f0d"><span>2020.09.03 11:21:00</span></div>
<div class="a celld" style="left:575.5px;top:380.7px;width:113.5px;color:#0d8f0d"><span>146</span></div>
<div class="a celld" style="left:1513px;top:380.7px;width:144px;color:#0d8f0d"><span>2000.01.02</span></div>
<div class="a celld" style="left:1663px;top:380.7px;width:144px;color:#0d8f0d"><span>1</span></div>
<div class="a cellc" style="left:1992px;top:378.7px;width:125px;color:#0d8f0d">出院</div>
<div class="a cellc" style="left:2123px;top:378.7px;width:69px;color:#0d8f0d">女</div>
<div class="a celld" style="left:2199px;top:380.7px;width:6px;color:#0d8f0d"><span>8</span></div>
<div class="a celld" style="left:19px;top:415.2px;width:100px;color:#0d8f0d"><span>01544</span></div>
<div class="a celld" style="left:125px;top:415.2px;width:219.5px;color:#0d8f0d"><span>2020.09.04 13:47:02</span></div>
<div class="a celld" style="left:350.5px;top:415.2px;width:219.0px;color:#0d8f0d"><span>2020.09.04 14:38:19</span></div>
<div class="a celld" style="left:575.5px;top:415.2px;width:113.5px;color:#0d8f0d"><span>1</span></div>
<div class="a celld" style="left:1513px;top:415.2px;width:144px;color:#0d8f0d"><span>1990.03.07</span></div>
<div class="a celld" style="left:1663px;top:415.2px;width:144px;color:#0d8f0d"><span>1</span></div>
<div class="a cellc" style="left:1992px;top:413.2px;width:125px;color:#0d8f0d">出院</div>
<div class="a cellc" style="left:2123px;top:413.2px;width:69px;color:#0d8f0d">男</div>
<div class="a celld" style="left:2199px;top:415.2px;width:6px;color:#0d8f0d"><span>1</span></div>
<div class="a celld" style="left:19px;top:449.7px;width:100px;color:#0d8f0d"><span>01548</span></div>
<div class="a celld" style="left:125px;top:449.7px;width:219.5px;color:#0d8f0d"><span>2020.09.09 13:51:42</span></div>
<div class="a celld" style="left:350.5px;top:449.7px;width:219.0px;color:#0d8f0d"><span>2020.09.09 14:30:44</span></div>
<div class="a celld" style="left:575.5px;top:449.7px;width:113.5px;color:#0d8f0d"><span>1</span></div>
<div class="a celld" style="left:1513px;top:449.7px;width:144px;color:#0d8f0d"><span>2001.09.22</span></div>
<div class="a celld" style="left:1663px;top:449.7px;width:144px;color:#0d8f0d"><span>1</span></div>
<div class="a cellc" style="left:1992px;top:447.7px;width:125px;color:#0d8f0d">出院</div>
<div class="a cellc" style="left:2123px;top:447.7px;width:69px;color:#0d8f0d">男</div>
<div class="a celld" style="left:2199px;top:449.7px;width:6px;color:#0d8f0d"><span>1</span></div>
<div class="a celld" style="left:19px;top:484.2px;width:100px;color:#0d8f0d"><span>01554</span></div>
<div class="a celld" style="left:125px;top:484.2px;width:219.5px;color:#0d8f0d"><span>2020.09.13 17:51:00</span></div>
<div class="a celld" style="left:350.5px;top:484.2px;width:219.0px;color:#0d8f0d"><span>2020.09.13 19:00:00</span></div>
<div class="a celld" style="left:575.5px;top:484.2px;width:113.5px;color:#0d8f0d"><span>1</span></div>
<div class="a cellc" style="left:1212px;top:482.2px;width:144px;color:#0d8f0d">高静</div>
<div class="a cellc" style="left:1362px;top:482.2px;width:144px;color:#0d8f0d">高静</div>
<div class="a celld" style="left:1513px;top:484.2px;width:144px;color:#0d8f0d"><span>2020.09.13</span></div>
<div class="a celld" style="left:1663px;top:484.2px;width:144px;color:#0d8f0d"><span>1</span></div>
<div class="a cellc" style="left:1992px;top:482.2px;width:125px;color:#0d8f0d">出院</div>
<div class="a cellc" style="left:2123px;top:482.2px;width:69px;color:#0d8f0d">男</div>
<div class="a celld" style="left:2199px;top:484.2px;width:6px;color:#0d8f0d"><span>1</span></div>
<div class="a celld" style="left:19px;top:518.7px;width:100px;color:#0d8f0d"><span>00107</span></div>
<div class="a celld" style="left:125px;top:518.7px;width:219.5px;color:#0d8f0d"><span>2019.07.31 11:43:07</span></div>
<div class="a celld" style="left:350.5px;top:518.7px;width:219.0px;color:#0d8f0d"><span>2020.09.17 11:00:00</span></div>
<div class="a celld" style="left:575.5px;top:518.7px;width:113.5px;color:#0d8f0d"><span>414</span></div>
<div class="a celld" style="left:1513px;top:518.7px;width:144px;color:#0d8f0d"><span>1986.01.24</span></div>
<div class="a celld" style="left:1663px;top:518.7px;width:144px;color:#0d8f0d"><span>2</span></div>
<div class="a celld" style="left:1813px;top:518.7px;width:167px;color:#0d8f0d"><span>000000000067</span></div>
<div class="a cellc" style="left:1992px;top:516.7px;width:125px;color:#0d8f0d">出院</div>
<div class="a cellc" style="left:2123px;top:516.7px;width:69px;color:#0d8f0d">女</div>
<div class="a celld" style="left:2199px;top:518.7px;width:6px;color:#0d8f0d"><span>1</span></div>
<div class="a celld" style="left:19px;top:553.2px;width:100px;color:#0d8f0d"><span>01521</span></div>
<div class="a celld" style="left:125px;top:553.2px;width:219.5px;color:#0d8f0d"><span>2020.08.28 09:17:46</span></div>
<div class="a celld" style="left:350.5px;top:553.2px;width:219.0px;color:#0d8f0d"><span>2020.09.22 10:00:00</span></div>
<div class="a celld" style="left:575.5px;top:553.2px;width:113.5px;color:#0d8f0d"><span>25</span></div>
<div class="a cellc" style="left:1212px;top:551.2px;width:144px;color:#0d8f0d">翁琼珠</div>
<div class="a cellc" style="left:1362px;top:551.2px;width:144px;color:#0d8f0d">江川</div>
<div class="a celld" style="left:1513px;top:553.2px;width:144px;color:#0d8f0d"><span>1931.11.15</span></div>
<div class="a celld" style="left:1663px;top:553.2px;width:144px;color:#0d8f0d"><span>1</span></div>
<div class="a celld" style="left:1813px;top:553.2px;width:167px;color:#0d8f0d"><span>350000364542</span></div>
<div class="a cellc" style="left:1992px;top:551.2px;width:125px;color:#0d8f0d">出院</div>
<div class="a cellc" style="left:2123px;top:551.2px;width:69px;color:#0d8f0d">男</div>
<div class="a celld" style="left:2199px;top:553.2px;width:6px;color:#0d8f0d"><span>1</span></div>
<div class="a celld" style="left:19px;top:587.7px;width:100px;color:#0d8f0d"><span>015581</span></div>
<div class="a celld" style="left:125px;top:587.7px;width:219.5px;color:#0d8f0d"><span>2020.09.16 10:25:23</span></div>
<div class="a celld" style="left:350.5px;top:587.7px;width:219.0px;color:#0d8f0d"><span>2020.09.22 17:35:10</span></div>
<div class="a celld" style="left:575.5px;top:587.7px;width:113.5px;color:#0d8f0d"><span>6</span></div>
<div class="a celld" style="left:1513px;top:587.7px;width:144px;color:#0d8f0d"><span>1990.03.07</span></div>
<div class="a celld" style="left:1663px;top:587.7px;width:144px;color:#0d8f0d"><span>1</span></div>
<div class="a celld" style="left:1813px;top:587.7px;width:167px;color:#0d8f0d"><span>E58434532</span></div>
<div class="a cellc" style="left:1992px;top:585.7px;width:125px;color:#0d8f0d">出院</div>
<div class="a cellc" style="left:2123px;top:585.7px;width:69px;color:#0d8f0d">男</div>
<div class="a celld" style="left:2199px;top:587.7px;width:6px;color:#0d8f0d"><span>1</span></div>
<div class="a celld" style="left:19px;top:622.2px;width:100px;color:#0d8f0d"><span>01561</span></div>
<div class="a celld" style="left:125px;top:622.2px;width:219.5px;color:#0d8f0d"><span>2020.09.19 15:40:19</span></div>
<div class="a celld" style="left:350.5px;top:622.2px;width:219.0px;color:#0d8f0d"><span>2020.09.30 16:49:00</span></div>
<div class="a celld" style="left:575.5px;top:622.2px;width:113.5px;color:#0d8f0d"><span>11</span></div>
<div class="a cellc" style="left:1212px;top:620.2px;width:144px;color:#0d8f0d">高静</div>
<div class="a cellc" style="left:1362px;top:620.2px;width:144px;color:#0d8f0d">杨鸿</div>
<div class="a celld" style="left:1513px;top:622.2px;width:144px;color:#0d8f0d"><span>2001.06.01</span></div>
<div class="a celld" style="left:1663px;top:622.2px;width:144px;color:#0d8f0d"><span>1</span></div>
<div class="a cellc" style="left:1992px;top:620.2px;width:125px;color:#0d8f0d">出院</div>
<div class="a cellc" style="left:2123px;top:620.2px;width:69px;color:#0d8f0d">男</div>
<div class="a celld" style="left:2199px;top:622.2px;width:6px;color:#0d8f0d"><span>1</span></div>
<div class="a celld" style="left:19px;top:656.7px;width:100px;color:#0d8f0d"><span>01560</span></div>
<div class="a celld" style="left:125px;top:656.7px;width:219.5px;color:#0d8f0d"><span>2020.09.16 11:25:07</span></div>
<div class="a celld" style="left:350.5px;top:656.7px;width:219.0px;color:#0d8f0d"><span>2020.10.01 11:30:00</span></div>
<div class="a celld" style="left:575.5px;top:656.7px;width:113.5px;color:#0d8f0d"><span>15</span></div>
<div class="a cellc" style="left:1212px;top:654.7px;width:144px;color:#0d8f0d">何顺勇</div>
<div class="a cellc" style="left:1362px;top:654.7px;width:144px;color:#0d8f0d">管理员</div>
<div class="a celld" style="left:1513px;top:656.7px;width:144px;color:#0d8f0d"><span>1946.02.20</span></div>
<div class="a celld" style="left:1663px;top:656.7px;width:144px;color:#0d8f0d"><span>1</span></div>
<div class="a cellc" style="left:1992px;top:654.7px;width:125px;color:#0d8f0d">出院</div>
<div class="a cellc" style="left:2123px;top:654.7px;width:69px;color:#0d8f0d">男</div>
<div class="a celld" style="left:2199px;top:656.7px;width:6px;color:#0d8f0d"><span>1</span></div>
<div class="a celld" style="left:19px;top:691.2px;width:100px;color:#0d8f0d"><span>01544</span></div>
<div class="a celld" style="left:125px;top:691.2px;width:219.5px;color:#0d8f0d"><span>2020.09.17 17:30:16</span></div>
<div class="a celld" style="left:350.5px;top:691.2px;width:219.0px;color:#0d8f0d"><span>2020.10.08 19:54:00</span></div>
<div class="a celld" style="left:575.5px;top:691.2px;width:113.5px;color:#0d8f0d"><span>21</span></div>
<div class="a cellc" style="left:1212px;top:689.2px;width:144px;color:#0d8f0d">徐永红</div>
<div class="a cellc" style="left:1362px;top:689.2px;width:144px;color:#0d8f0d">管理员</div>
<div class="a celld" style="left:1513px;top:691.2px;width:144px;color:#0d8f0d"><span>1990.03.07</span></div>
<div class="a celld" style="left:1663px;top:691.2px;width:144px;color:#0d8f0d"><span>2</span></div>
<div class="a cellc" style="left:1992px;top:689.2px;width:125px;color:#0d8f0d">出院</div>
<div class="a cellc" style="left:2123px;top:689.2px;width:69px;color:#0d8f0d">男</div>
<div class="a celld" style="left:2199px;top:691.2px;width:6px;color:#0d8f0d"><span>1</span></div>
<div class="a celld" style="left:19px;top:725.7px;width:100px;color:#0d8f0d"><span>01528</span></div>
<div class="a celld" style="left:125px;top:725.7px;width:219.5px;color:#0d8f0d"><span>2020.09.13 15:26:37</span></div>
<div class="a celld" style="left:350.5px;top:725.7px;width:219.0px;color:#0d8f0d"><span>2020.10.09 14:33:00</span></div>
<div class="a celld" style="left:575.5px;top:725.7px;width:113.5px;color:#0d8f0d"><span>26</span></div>
<div class="a celld" style="left:1513px;top:725.7px;width:144px;color:#0d8f0d"><span>1999.01.07</span></div>
<div class="a celld" style="left:1663px;top:725.7px;width:144px;color:#0d8f0d"><span>1</span></div>
<div class="a celld" style="left:1813px;top:725.7px;width:167px;color:#0d8f0d"><span>*2000009470</span></div>
<div class="a cellc" style="left:1992px;top:723.7px;width:125px;color:#0d8f0d">出院</div>
<div class="a cellc" style="left:2123px;top:723.7px;width:69px;color:#0d8f0d">男</div>
<div class="a celld" style="left:2199px;top:725.7px;width:6px;color:#0d8f0d"><span>1</span></div>
<div class="a celld" style="left:19px;top:760.2px;width:100px;color:#0d8f0d"><span>00193060</span></div>
<div class="a celld" style="left:125px;top:760.2px;width:219.5px;color:#0d8f0d"><span>2014.01.09 09:40:00</span></div>
<div class="a celld" style="left:350.5px;top:760.2px;width:219.0px;color:#0d8f0d"><span>2020.10.13 17:55:00</span></div>
<div class="a celld" style="left:575.5px;top:760.2px;width:113.5px;color:#0d8f0d"><span>2469</span></div>
<div class="a cellc" style="left:1212px;top:758.2px;width:144px;color:#0d8f0d">系统</div>
<div class="a cellc" style="left:1362px;top:758.2px;width:144px;color:#0d8f0d">系统</div>
<div class="a celld" style="left:1513px;top:760.2px;width:144px;color:#0d8f0d"><span>1992.02.19</span></div>
<div class="a celld" style="left:1663px;top:760.2px;width:144px;color:#0d8f0d"><span>1</span></div>
<div class="a celld" style="left:1813px;top:760.2px;width:167px;color:#0d8f0d"><span>35022177011735311</span></div>
<div class="a cellc" style="left:1992px;top:758.2px;width:125px;color:#0d8f0d">出院</div>
<div class="a cellc" style="left:2123px;top:758.2px;width:69px;color:#0d8f0d">男</div>
<div class="a celld" style="left:2199px;top:760.2px;width:6px;color:#0d8f0d"><span>1</span></div>
<div class="a celld" style="left:19px;top:794.7px;width:100px;color:#0d8f0d"><span>00192606</span></div>
<div class="a celld" style="left:125px;top:794.7px;width:219.5px;color:#0d8f0d"><span>2014.01.02 09:30:00</span></div>
<div class="a celld" style="left:350.5px;top:794.7px;width:219.0px;color:#0d8f0d"><span>2020.10.15 10:00:00</span></div>
<div class="a celld" style="left:575.5px;top:794.7px;width:113.5px;color:#0d8f0d"><span>2478</span></div>
<div class="a cellc" style="left:1212px;top:792.7px;width:144px;color:#0d8f0d">郑琳</div>
<div class="a cellc" style="left:1362px;top:792.7px;width:144px;color:#0d8f0d">张芸</div>
<div class="a celld" style="left:1513px;top:794.7px;width:144px;color:#0d8f0d"><span>1958.09.18</span></div>
<div class="a celld" style="left:1663px;top:794.7px;width:144px;color:#0d8f0d"><span>1</span></div>
<div class="a celld" style="left:1813px;top:794.7px;width:167px;color:#0d8f0d"><span>A38293825</span></div>
<div class="a cellc" style="left:1992px;top:792.7px;width:125px;color:#0d8f0d">出院</div>
<div class="a cellc" style="left:2123px;top:792.7px;width:69px;color:#0d8f0d">男</div>
<div class="a celld" style="left:2199px;top:794.7px;width:6px;color:#0d8f0d"><span>1</span></div>
<div class="a celld" style="left:19px;top:829.2px;width:100px;color:#0d8f0d"><span>01579</span></div>
<div class="a celld" style="left:125px;top:829.2px;width:219.5px;color:#0d8f0d"><span>2020.10.15 16:23:47</span></div>
<div class="a celld" style="left:350.5px;top:829.2px;width:219.0px;color:#0d8f0d"><span>2020.10.15 16:46:00</span></div>
<div class="a celld" style="left:575.5px;top:829.2px;width:113.5px;color:#0d8f0d"><span>1</span></div>
<div class="a cellc" style="left:1212px;top:827.2px;width:144px;color:#0d8f0d">廖欢欢</div>
<div class="a cellc" style="left:1362px;top:827.2px;width:144px;color:#0d8f0d">高静</div>
<div class="a celld" style="left:1513px;top:829.2px;width:144px;color:#0d8f0d"><span>2000.10.11</span></div>
<div class="a celld" style="left:1663px;top:829.2px;width:144px;color:#0d8f0d"><span>1</span></div>
<div class="a cellc" style="left:1992px;top:827.2px;width:125px;color:#0d8f0d">出院</div>
<div class="a cellc" style="left:2123px;top:827.2px;width:69px;color:#0d8f0d">男</div>
<div class="a celld" style="left:2199px;top:829.2px;width:6px;color:#0d8f0d"><span>1</span></div>
<div class="a celld" style="left:19px;top:863.7px;width:100px;color:#0d8f0d"><span>01593</span></div>
<div class="a celld" style="left:125px;top:863.7px;width:219.5px;color:#0d8f0d"><span>2020.10.21 14:07:46</span></div>
<div class="a celld" style="left:350.5px;top:863.7px;width:219.0px;color:#0d8f0d"><span>2020.10.21 14:26:04</span></div>
<div class="a celld" style="left:575.5px;top:863.7px;width:113.5px;color:#0d8f0d"><span>1</span></div>
<div class="a cellc" style="left:1212px;top:861.7px;width:144px;color:#0d8f0d">陈雪英</div>
<div class="a cellc" style="left:1362px;top:861.7px;width:144px;color:#0d8f0d">杨鸿</div>
<div class="a celld" style="left:1513px;top:863.7px;width:144px;color:#0d8f0d"><span>2001.02.16</span></div>
<div class="a celld" style="left:1663px;top:863.7px;width:144px;color:#0d8f0d"><span>1</span></div>
<div class="a cellc" style="left:1992px;top:861.7px;width:125px;color:#0d8f0d">出院</div>
<div class="a cellc" style="left:2123px;top:861.7px;width:69px;color:#0d8f0d">女</div>
<div class="a celld" style="left:2199px;top:863.7px;width:6px;color:#0d8f0d"><span>1</span></div>
<div class="a celld" style="left:19px;top:898.2px;width:100px;color:#0d8f0d"><span>01157</span></div>
<div class="a celld" style="left:125px;top:898.2px;width:219.5px;color:#0d8f0d"><span>2020.02.06 15:01:58</span></div>
<div class="a celld" style="left:350.5px;top:898.2px;width:219.0px;color:#0d8f0d"><span>2020.10.21 23:59:59</span></div>
<div class="a celld" style="left:575.5px;top:898.2px;width:113.5px;color:#0d8f0d"><span>258</span></div>
<div class="a cellc" style="left:1212px;top:896.2px;width:144px;color:#0d8f0d">陈雪兰</div>
<div class="a cellc" style="left:1362px;top:896.2px;width:144px;color:#0d8f0d">郑京</div>
<div class="a celld" style="left:1513px;top:898.2px;width:144px;color:#0d8f0d"><span>2001.08.22</span></div>
<div class="a celld" style="left:1663px;top:898.2px;width:144px;color:#0d8f0d"><span>1</span></div>
<div class="a cellc" style="left:1992px;top:896.2px;width:125px;color:#0d8f0d">出院</div>
<div class="a cellc" style="left:2123px;top:896.2px;width:69px;color:#0d8f0d">男</div>
<div class="a celld" style="left:2199px;top:898.2px;width:6px;color:#0d8f0d"><span>1</span></div>
</div>
<!--/GRID-->
<!-- vertical scrollbar -->
<div class="a" style="left:2211px;top:343px;width:24px;height:928px;background:linear-gradient(90deg,#95b0d6,#87a3cb 50%,#7e9cc6)"></div>
<svg class="a" style="left:2214px;top:348px" width="18" height="12" viewBox="0 0 18 12"><path d="M1.5 10L9 2l7.5 8z" fill="#4f5f80"/></svg>
<div class="a" style="left:2211px;top:369px;width:23px;height:176px;border:1px solid #5e7aa6;border-radius:3px;background:linear-gradient(90deg,#e8ecf2 0%,#e1e6ee 40%,#c4d0e0 45%,#c0cde0 100%)"></div>
<div class="a" style="left:2216px;top:452px;width:14px;height:11px;background:repeating-linear-gradient(#8a96aa 0 1px,transparent 1px 3px)"></div>
<svg class="a" style="left:2214px;top:1254px" width="18" height="12" viewBox="0 0 18 12"><path d="M1.5 2L9 10l7.5-8z" fill="#4f5f80"/></svg>
<!-- horizontal scrollbar -->
<div class="a" style="left:5px;top:1271px;width:2230px;height:25px;background:linear-gradient(#9bb4d8,#8aa5cc 50%,#7f9cc4)"></div>
<svg class="a" style="left:12px;top:1276px" width="12" height="16" viewBox="0 0 12 16"><path d="M10 1L2 8l8 7z" fill="#4f5f80"/></svg>
<svg class="a" style="left:2191px;top:1276px" width="12" height="16" viewBox="0 0 12 16"><path d="M2 1l8 7-8 7z" fill="#4f5f80"/></svg>
<div class="a" style="left:445px;top:1271px;width:1004px;height:25px;border:1px solid #5e7aa6;border-radius:3px;background:linear-gradient(#e6eaf0 0%,#dfe4ec 40%,#c4d0e0 45%,#bccadd 100%)"></div>
<div class="a" style="left:940px;top:1277px;width:11px;height:13px;background:repeating-linear-gradient(90deg,#8a96aa 0 1px,transparent 1px 3px)"></div>
<!-- status bar -->
<div class="a" style="left:3px;top:1298px;width:2234px;height:39px;background:linear-gradient(#deebfd,#b6d5fb);border:2px solid #7ba3d9"></div>
<div class="t" style="left:22px;top:1311px;font-size:19px;color:#1f4a96">共检索到</div>
<div class="t" style="left:118px;top:1313px;font-size:17px;color:#1f4a96;font-family:'Liberation Mono',monospace">128</div>
<div class="t" style="left:203px;top:1311px;font-size:19px;color:#1f4a96">条记录</div>
<div class="t" style="left:318px;top:1307px;font-size:18px;color:#1f4a96">当前选中了<span style="font-family:'Liberation Mono',monospace;font-size:16px;letter-spacing:-2px">1</span>条记录</div>
<div class="a" style="left:0;top:1337px;width:2240px;height:4px;background:#ebebeb;border-top:1px solid #fff"></div>
<div class="a" style="left:225px;top:1338px;width:72px;height:3px;background:#f0a050"></div>
<div class="a" style="left:2238px;top:36px;width:1px;height:1301px;background:#d4d4d4"></div>
<!-- annotation rectangle -->
<div class="a" style="left:1976px;top:318px;width:155px;height:950px;border:3px solid #f0883a"></div>

</body></html>
